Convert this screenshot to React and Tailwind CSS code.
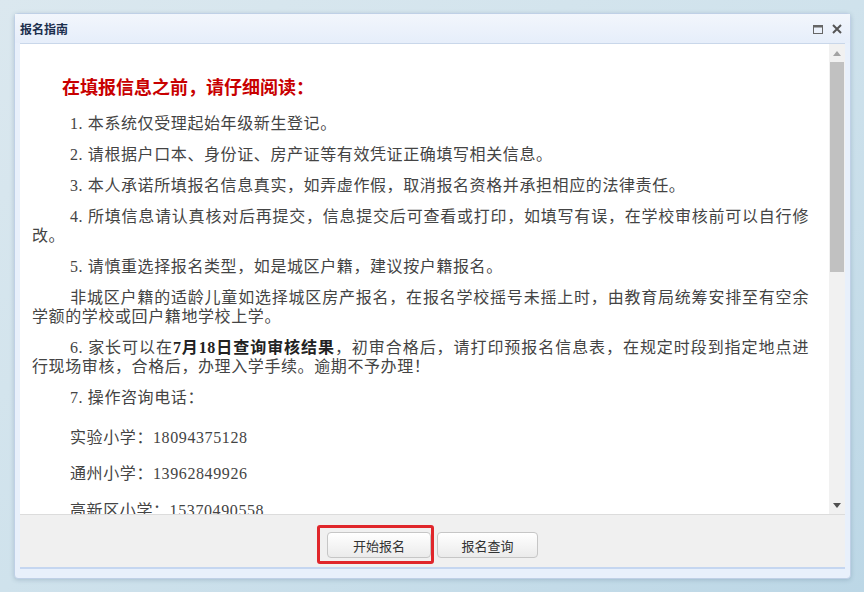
import React from "react";

const bodyFont = { fontFamily: '"Liberation Serif","Noto Sans CJK SC",serif' };
const uiFont = { fontFamily: '"Noto Sans CJK SC","Noto Sans",sans-serif' };

function JLine({ children }) {
  return (
    <span className="block whitespace-nowrap text-justify [text-align-last:justify]">{children}</span>
  );
}

export default function App() {
  return (
    <div className="w-[864px] h-[592px] overflow-hidden bg-gradient-to-br from-[#dbe8ef] via-[#cfe2ec] to-[#bcd7e6] pt-[13px] pl-[14px]">
      <div className="w-[837px] h-[566px] rounded-[4px] border border-[#bfd0e6] bg-[#e8f0fb] shadow-[0_1px_4px_rgba(60,90,120,0.25)] flex flex-col">
        {/* Title bar */}
        <div className="h-[29px] flex items-center justify-between pl-[5px] pr-[8px] bg-gradient-to-b from-[#f2f6fc] to-[#e6eefa]">
          <span className="text-[12px] font-bold text-[#1c2f4d] leading-none" style={uiFont}>报名指南</span>
          <div className="flex items-center gap-[9px] pt-[1px]">
            <svg width="10" height="9" viewBox="0 0 10 9">
              <rect x="0.5" y="0.5" width="9" height="8" fill="none" stroke="#666" strokeWidth="1" />
              <rect x="0" y="0" width="10" height="2.5" fill="#666" />
            </svg>
            <svg width="10" height="10" viewBox="0 0 10 10">
              <path d="M1 1 L9 9 M9 1 L1 9" stroke="#555" strokeWidth="2" />
            </svg>
          </div>
        </div>
        {/* Body */}
        <div className="mx-[5px] h-[471px] border-t border-[#c9d7ea] bg-white flex">
          <div className="flex-1 overflow-hidden pl-[12px] pr-[20px] pt-[30px] text-[16px] text-[#444] tracking-[0.6px]" style={bodyFont}>
            <div className="pl-[30px] text-[18px] leading-[24px] font-bold text-[#c80000] tracking-normal" style={uiFont}>
              在填报信息之前，请仔细阅读：
            </div>
            <div className="mt-[16px] flex flex-col gap-[12px] leading-[19px]">
              <p className="indent-[38px]">1. 本系统仅受理起始年级新生登记。</p>
              <p className="indent-[38px]">2. 请根据户口本、身份证、房产证等有效凭证正确填写相关信息。</p>
              <p className="indent-[38px]">3. 本人承诺所填报名信息真实，如弄虚作假，取消报名资格并承担相应的法律责任。</p>
              <div>
                <JLine><span className="inline-block w-[38px]"></span>4. 所填信息请认真核对后再提交，信息提交后可查看或打印，如填写有误，在学校审核前可以自行修</JLine>
                <span className="block">改。</span>
              </div>
              <p className="indent-[38px]">5. 请慎重选择报名类型，如是城区户籍，建议按户籍报名。</p>
              <div>
                <JLine><span className="inline-block w-[38px]"></span>非城区户籍的适龄儿童如选择城区房产报名，在报名学校摇号未摇上时，由教育局统筹安排至有空余</JLine>
                <span className="block">学额的学校或回户籍地学校上学。</span>
              </div>
              <div>
                <JLine><span className="inline-block w-[38px]"></span>6. 家长可以在<b className="text-[#222]">7月18日查询审核结果</b>，初审合格后，请打印预报名信息表，在规定时段到指定地点进</JLine>
                <span className="block">行现场审核，合格后，办理入学手续。逾期不予办理！</span>
              </div>
              <p className="indent-[38px]">7. 操作咨询电话：</p>
              <p className="indent-[38px] mt-[9px]">实验小学：18094375128</p>
              <p className="indent-[38px] mt-[5px]">通州小学：13962849926</p>
              <p className="indent-[38px] mt-[6px]">高新区小学：15370490558</p>
            </div>
          </div>
          {/* Scrollbar */}
          <div className="w-[16px] bg-[#f1f1f1] flex flex-col">
            <div className="h-[18px] flex items-center justify-center">
              <svg width="8" height="5" viewBox="0 0 8 5"><path d="M0 5 L4 0 L8 5 Z" fill="#a3a3a3" /></svg>
            </div>
            <div className="h-[210px] mx-[1px] bg-[#c1c1c1]"></div>
            <div className="flex-1"></div>
            <div className="h-[18px] flex items-center justify-center">
              <svg width="8" height="5" viewBox="0 0 8 5"><path d="M0 0 L8 0 L4 5 Z" fill="#505050" /></svg>
            </div>
          </div>
        </div>
        {/* Footer */}
        <div className="relative mx-[5px] h-[55px] border-t border-[#dcdcdc] bg-[#f0f0f0] border-b-2 border-b-[#c5d6f0] flex justify-center gap-[6px] pt-[17px]" style={uiFont}>
          <button className="w-[104px] h-[26px] rounded-[4px] border border-[#c6c6c6] bg-gradient-to-b from-white to-[#ebebeb] text-[13px] text-[#333] leading-none">开始报名</button>
          <button className="w-[101px] h-[26px] rounded-[4px] border border-[#c6c6c6] bg-gradient-to-b from-white to-[#ebebeb] text-[13px] text-[#333] leading-none">报名查询</button>
          <div className="absolute left-[297px] top-[10px] w-[117px] h-[39px] rounded-[3px] border-[3px] border-[#e0262b] pointer-events-none"></div>
        </div>
      </div>
    </div>
  );
}
